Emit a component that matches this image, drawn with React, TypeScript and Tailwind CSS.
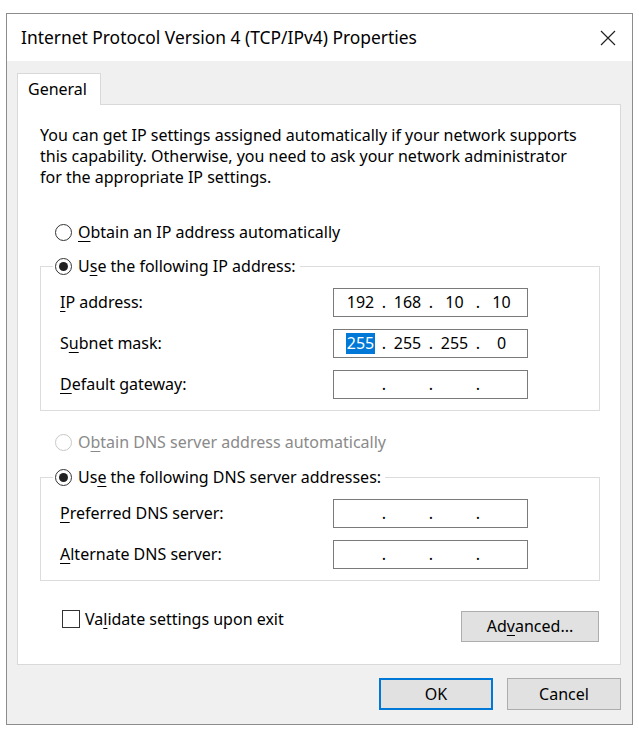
import React from 'react';

const Radio = ({ checked = false, disabled = false }: { checked?: boolean; disabled?: boolean }) => (
  <span
    className={`flex h-[17px] w-[17px] shrink-0 items-center justify-center rounded-full border bg-white ${
      disabled ? 'border-[#c8c8c8]' : 'border-[#333333]'
    }`}
  >
    {checked && <span className="h-[9px] w-[9px] rounded-full bg-[#222222]" />}
  </span>
);

const Key = ({ children }: { children: React.ReactNode }) => (
  <span className="underline decoration-1 underline-offset-[3px]">{children}</span>
);

const IpField = ({ parts, selectFirst = false }: { parts: string[]; selectFirst?: boolean }) => (
  <div className="flex h-[29px] w-[195px] items-center border border-[#7a7a7a] bg-white pl-[7px] text-black">
    {parts.map((p, i) => (
      <React.Fragment key={i}>
        {i > 0 && <span className="w-[8px] text-center">.</span>}
        <span className="flex w-[39px] justify-center">
          {selectFirst && i === 0 ? (
            <span className="bg-[#0078d7] px-[1px] leading-[21px] text-white">{p}</span>
          ) : (
            p
          )}
        </span>
      </React.Fragment>
    ))}
  </div>
);

const Row = ({ label, parts, selectFirst }: { label: React.ReactNode; parts: string[]; selectFirst?: boolean }) => (
  <div className="flex h-[29px] items-center pl-[19px] pr-[71px]">
    <span className="flex-1">{label}</span>
    <IpField parts={parts} selectFirst={selectFirst} />
  </div>
);

const Button = ({ children, primary = false, className = '' }: { children: React.ReactNode; primary?: boolean; className?: string }) => (
  <button
    className={`flex items-center justify-center bg-[#e1e1e1] text-black ${
      primary ? 'border-2 border-[#0078d7]' : 'border border-[#adadad]'
    } ${className}`}
  >
    {children}
  </button>
);

export default function App() {
  const empty = ['', '', '', ''];
  return (
    <div className="min-h-screen bg-white pl-[6px] pt-[13px] font-['Noto_Sans','Open_Sans',sans-serif] text-[16px] leading-[21px] text-black">
      <div className="flex h-[712px] w-[627px] flex-col border border-[#8c8c8c] bg-[#f0f0f0]">
        {/* title bar */}
        <div className="flex h-[47px] items-center justify-between bg-white pl-[14px] pr-[16px]">
          <span className="text-[17.4px]">Internet Protocol Version 4 (TCP/IPv4) Properties</span>
          <svg width="16" height="16" viewBox="0 0 16 16" className="text-[#222]">
            <path d="M1 1 L15 15 M15 1 L1 15" stroke="currentColor" strokeWidth="1.2" fill="none" />
          </svg>
        </div>

        <div className="flex flex-1 flex-col pl-[10px] pr-[11px] pt-[12px]">
          {/* tab strip */}
          <div className="flex">
            <div className="relative z-10 -mb-px flex h-[32px] w-[84px] items-center border-x border-t border-[#d9d9d9] bg-white pl-[10px]">
              General
            </div>
          </div>

          {/* panel */}
          <div className="flex flex-col border border-[#d9d9d9] bg-white pb-[22px] pl-[22px] pr-[20px] pt-[20px]">
            <p>
              You can get IP settings assigned automatically if your network supports
              <br />
              this capability. Otherwise, you need to ask your network administrator
              <br />
              for the appropriate IP settings.
            </p>

            <div className="mt-[33px] flex h-[22px] items-center gap-[6px] pl-[15px]">
              <Radio />
              <span>
                <Key>O</Key>btain an IP address automatically
              </span>
            </div>

            <fieldset className="mt-[12px] border border-[#dcdcdc] pb-[11px]">
              <legend className="ml-[12px] flex h-[22px] items-center gap-[6px] pl-[2px] pr-[4px]">
                <Radio checked />
                <span>
                  U<Key>s</Key>e the following IP address:
                </span>
              </legend>
              <div className="mt-[11px] flex flex-col gap-[12px]">
                <Row label={<><Key>I</Key>P address:</>} parts={['192', '168', '10', '10']} />
                <Row label={<>S<Key>u</Key>bnet mask:</>} parts={['255', '255', '255', '0']} selectFirst />
                <Row label={<><Key>D</Key>efault gateway:</>} parts={empty} />
              </div>
            </fieldset>

            <div className="mt-[20px] flex h-[22px] items-center gap-[6px] pl-[15px] text-[#8a8a8a]">
              <Radio disabled />
              <span>
                O<Key>b</Key>tain DNS server address automatically
              </span>
            </div>

            <fieldset className="mt-[13px] border border-[#dcdcdc] pb-[11px]">
              <legend className="ml-[12px] flex h-[22px] items-center gap-[6px] pl-[2px] pr-[4px]">
                <Radio checked />
                <span>
                  Us<Key>e</Key> the following DNS server addresses:
                </span>
              </legend>
              <div className="mt-[11px] flex flex-col gap-[12px]">
                <Row label={<><Key>P</Key>referred DNS server:</>} parts={empty} />
                <Row label={<><Key>A</Key>lternate DNS server:</>} parts={empty} />
              </div>
            </fieldset>

            <div className="mt-[27px] flex items-start justify-between">
              <div className="ml-[22px] flex h-[22px] items-center gap-[5px]">
                <span className="h-[18px] w-[18px] border border-[#333333] bg-white" />
                <span>
                  Va<Key>l</Key>idate settings upon exit
                </span>
              </div>
              <Button className="mr-[1px] mt-[3px] h-[31px] w-[138px]">
                Ad<Key>v</Key>anced...
              </Button>
            </div>
          </div>

          {/* dialog buttons */}
          <div className="mt-[13px] flex justify-end gap-[14px]">
            <Button primary className="h-[32px] w-[114px]">
              OK
            </Button>
            <Button className="h-[32px] w-[114px]">Cancel</Button>
          </div>
        </div>
      </div>
    </div>
  );
}
